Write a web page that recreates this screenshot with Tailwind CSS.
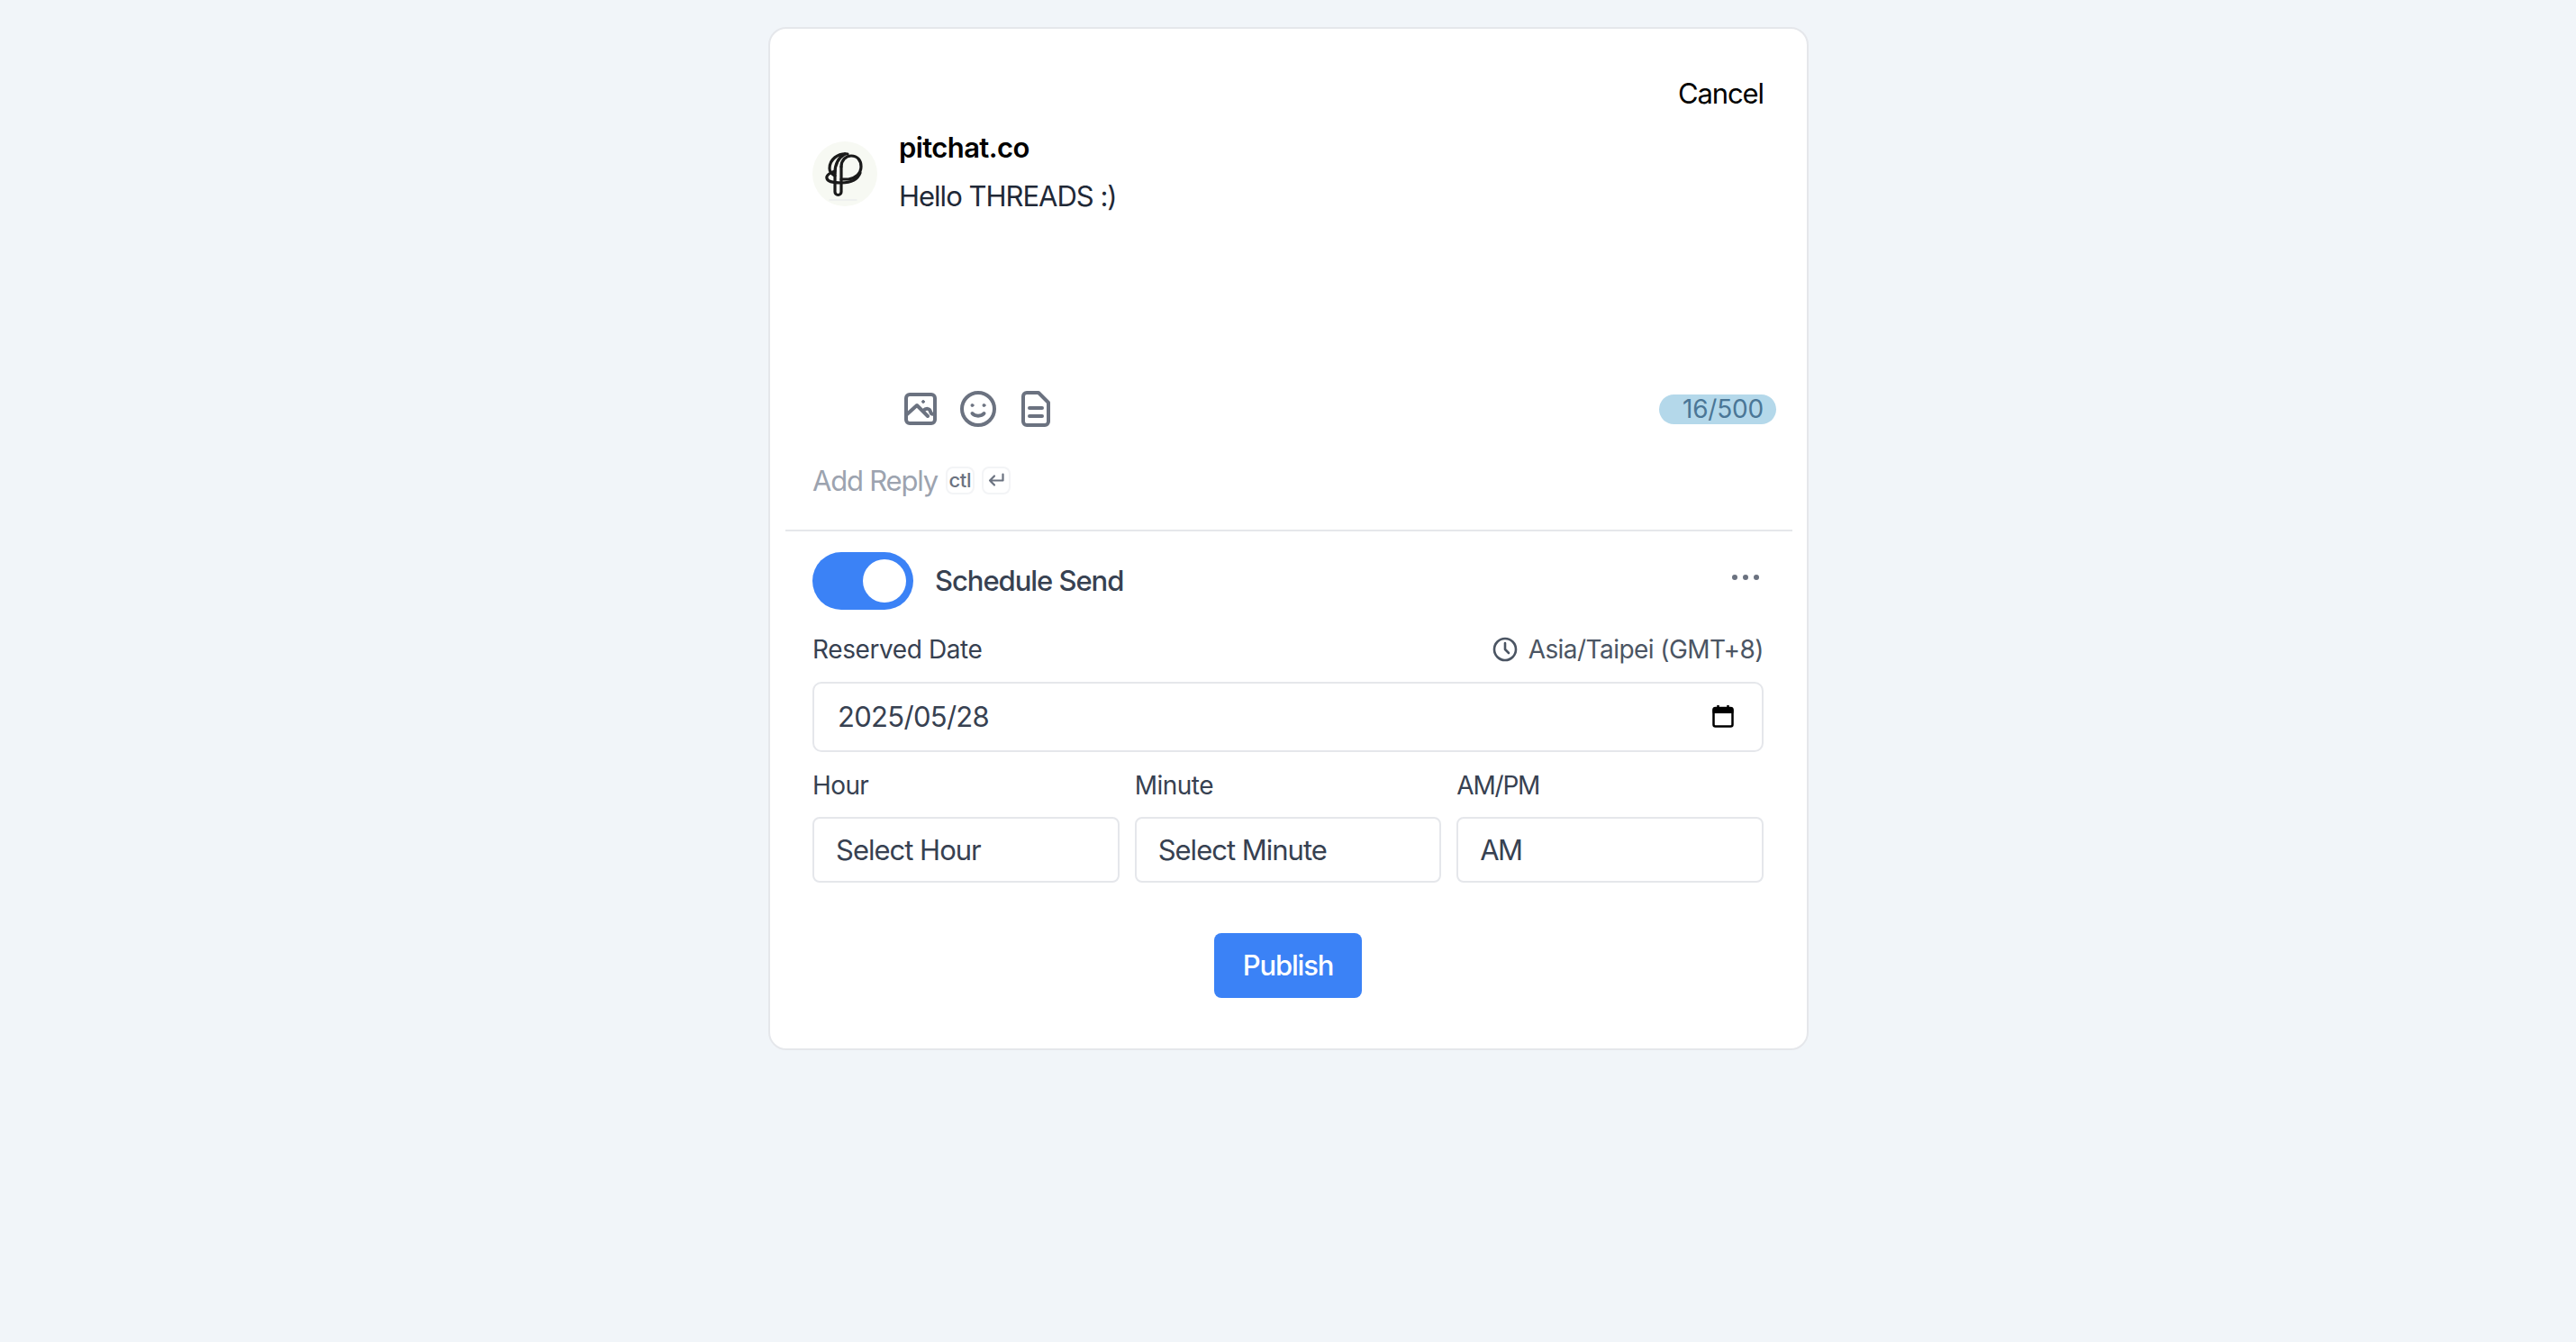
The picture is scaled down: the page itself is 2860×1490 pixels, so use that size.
<!DOCTYPE html>
<html lang="en">
<head>
    <meta charset="UTF-8">
    <title>Threads Composer</title>
    <script src="https://cdn.jsdelivr.net/npm/@tailwindcss/browser@4"></script>
</head>
<body class="bg-[#f1f5f9] min-h-screen font-['Inter',sans-serif]">
    <div class="w-[1155px] ml-[853px] mt-[30px] h-[1136px] bg-white border-2 border-[#e5e7eb] rounded-[20px] pl-[17px] pr-[16px] flex flex-col">
        <!-- composer -->
        <div class="pl-[30px] pr-[32px] h-[54px] mt-[44px] flex justify-end items-center">
            <button class="text-[31px] tracking-[-1.1px] text-black leading-none">Cancel</button>
        </div>
        <div class="pl-[30px] pr-[32px] mt-[4px] flex gap-[24px] h-[292px]">
            <div class="w-[72px] h-[72px] mt-[23px] rounded-full bg-[#f7f9f3] shrink-0">
                <svg width="72" height="72" viewBox="0 0 72 72" fill="none" stroke="#1a1a1a" stroke-width="3.2" stroke-linecap="round" stroke-linejoin="round">
                    <g transform="translate(-2 0)">
                        <path d="M27 35V56a3.5 3.5 0 0 0 7 0V28"/>
                        <path d="M27 35c0-10 4-17 11-21"/>
                        <path d="M34 28c0-7 5-12 11-12 7 0 11 5 11 12 0 8-7 13-14 14l-8 0"/>
                        <path d="M41 14C30 13 21 20 21 30c0 4 2 6 6 8"/>
                        <path d="M27 33c-6 2-10 5-9 8 1 4 9 5 16 5 10 0 18-3 21-11"/>
                    </g>
                    <path d="M19 65h30" stroke="#e5e7eb" stroke-width="1"/>
                </svg>
            </div>
            <div>
                <div class="text-[31px] tracking-[-0.6px] leading-[48px] font-semibold text-black h-[53px] pt-[6px]">pitchat.co</div>
                <div class="text-[31px] tracking-[-1px] leading-[48px] text-[#1f2937] mt-[7px]">Hello THREADS :)</div>
            </div>
        </div>
        <div class="flex items-center h-[44px] pl-[132px] pr-[18px] mt-[6px]">
            <div class="flex items-center">
                <svg width="36" height="36" viewBox="0 0 36 36" fill="none" stroke="#6b7280" stroke-width="4" stroke-linecap="round" stroke-linejoin="round">
                    <rect x="2" y="2" width="32" height="32" rx="4"/>
                    <path d="M3 24l11-10 12 12"/>
                    <path d="M21 20c3-3 7-3 8 1 1 4 4 3 5 1"/>
                    <circle cx="21" cy="10" r="1.4" fill="#6b7280" stroke-width="1"/>
                </svg>
                <svg class="ml-[26px]" width="40" height="40" viewBox="0 0 40 40" fill="none" stroke="#6b7280" stroke-width="4" stroke-linecap="round">
                    <circle cx="20" cy="20" r="18"/>
                    <circle cx="13.5" cy="16" r="1.5" fill="#6b7280" stroke-width="1"/>
                    <circle cx="26.5" cy="16" r="1.5" fill="#6b7280" stroke-width="1"/>
                    <path d="M13.5 25c3 3.5 10 3.5 13 0"/>
                </svg>
                <svg class="ml-[28px]" width="32" height="40" viewBox="0 0 32 40" fill="none" stroke="#6b7280" stroke-width="4" stroke-linecap="round" stroke-linejoin="round">
                    <path d="M6 2h13l11 11v21a4 4 0 0 1-4 4H6a4 4 0 0 1-4-4V6a4 4 0 0 1 4-4z"/>
                    <path d="M9 19h14M9 28h14"/>
                </svg>
            </div>
            <div class="ml-auto w-[130px] h-[33px] rounded-full bg-[#b4d8ea] text-[#4a7696] text-[28px] tracking-[-0.2px] leading-[33px] text-right pr-[14px]">16/500</div>
        </div>
        <div class="flex items-center pl-[30px] mt-[41px] h-[32px]">
            <span class="text-[31px] tracking-[-1.2px] leading-none text-[#9ca3af]">Add Reply</span>
            <kbd class="ml-[9px] w-[32px] h-[31px] border-2 border-[#f3f4f6] rounded-[8px] flex items-center justify-center text-[22px] tracking-[-0.3px] font-medium text-[#6b7280] font-['Inter',sans-serif]">ctl</kbd>
            <kbd class="ml-[8px] w-[32px] h-[31px] border-2 border-[#f3f4f6] rounded-[8px] flex items-center justify-center">
                <svg width="18" height="16" viewBox="0 0 18 16" fill="none" stroke="#6b7280" stroke-width="2.2" stroke-linecap="round" stroke-linejoin="round">
                    <path d="M16.5 1.5v7H2M7 3.5L2 8.500l5 5"/>
                </svg>
            </kbd>
        </div>
        <div class="h-[2px] bg-[#e5e7eb] mt-[39px]"></div>

        <!-- schedule -->
        <div class="pl-[30px] pr-[32px]">
            <div class="flex items-center mt-[23px] h-[64px]">
                <div class="w-[112px] h-[64px] rounded-full bg-[#3b82f6] p-[8px] flex justify-end">
                    <div class="w-[48px] h-[48px] rounded-full bg-white"></div>
                </div>
                <span class="ml-[24px] text-[31px] tracking-[-1.05px] font-medium text-[#374151]">Schedule Send</span>
                <div class="ml-auto flex gap-[6px] mr-[5px] mb-[8px]">
                    <span class="w-[6px] h-[6px] rounded-full bg-[#6b7280]"></span>
                    <span class="w-[6px] h-[6px] rounded-full bg-[#6b7280]"></span>
                    <span class="w-[6px] h-[6px] rounded-full bg-[#6b7280]"></span>
                </div>
            </div>
            <div class="flex items-center justify-between mt-[24px] h-[40px]">
                <label class="text-[28px] tracking-[-0.4px] text-[#374151]">Reserved Date</label>
                <div class="flex items-center gap-[12px] text-[28px] tracking-[-0.55px] text-[#4b5563]">
                    <svg width="28" height="28" viewBox="0 0 28 28" fill="none" stroke="#4b5563" stroke-width="2.6" stroke-linecap="round" stroke-linejoin="round">
                        <circle cx="14" cy="14" r="12"/>
                        <path d="M14 7v7l4 4"/>
                    </svg>
                    Asia/Taipei (GMT+8)
                </div>
            </div>
            <div class="mt-[16px] h-[78px] border-2 border-[#e5e7eb] rounded-[10px] flex items-center justify-between pl-[26px] pr-[31px]">
                <span class="text-[31px] tracking-[-0.7px] text-[#374151]">2025/05/28</span>
                <svg class="mb-[2px]" width="24" height="26" viewBox="0 0 24 26" fill="none" stroke="#000" stroke-width="2.5" stroke-linejoin="round">
                    <rect x="1.5" y="4" width="21" height="20.5" rx="2"/>
                    <path d="M1.5 6h21V9h-21z" fill="#000" stroke-width="2"/>
                    <path d="M6.500 1v4M17.500 1v4"/>
                </svg>
            </div>
            <div class="grid grid-cols-3 gap-[17px] mt-[17px]">
                <div>
                    <label class="block text-[28px] tracking-[-0.6px] leading-[40px] text-[#374151]">Hour</label>
                    <div class="mt-[15px] h-[73px] border-2 border-[#e5e7eb] rounded-[8px] flex items-center pl-[24px] pt-[2px] text-[31px] tracking-[-1px] text-[#374151]">Select Hour</div>
                </div>
                <div>
                    <label class="block text-[28px] tracking-[-0.5px] leading-[40px] text-[#374151]">Minute</label>
                    <div class="mt-[15px] h-[73px] border-2 border-[#e5e7eb] rounded-[8px] flex items-center pl-[24px] pt-[2px] text-[31px] tracking-[-1px] text-[#374151]">Select Minute</div>
                </div>
                <div>
                    <label class="block text-[28px] tracking-[-1.2px] leading-[40px] text-[#374151]">AM/PM</label>
                    <div class="mt-[15px] h-[73px] border-2 border-[#e5e7eb] rounded-[8px] flex items-center pl-[24px] pt-[2px] text-[31px] tracking-[-1.6px] text-[#374151]">AM</div>
                </div>
            </div>
            <div class="flex justify-center mt-[56px]">
                <button class="w-[164px] h-[72px] bg-[#3b82f6] text-white text-[31px] tracking-[-1.2px] font-medium rounded-[8px]">Publish</button>
            </div>
        </div>
    </div>
</body>
</html>
